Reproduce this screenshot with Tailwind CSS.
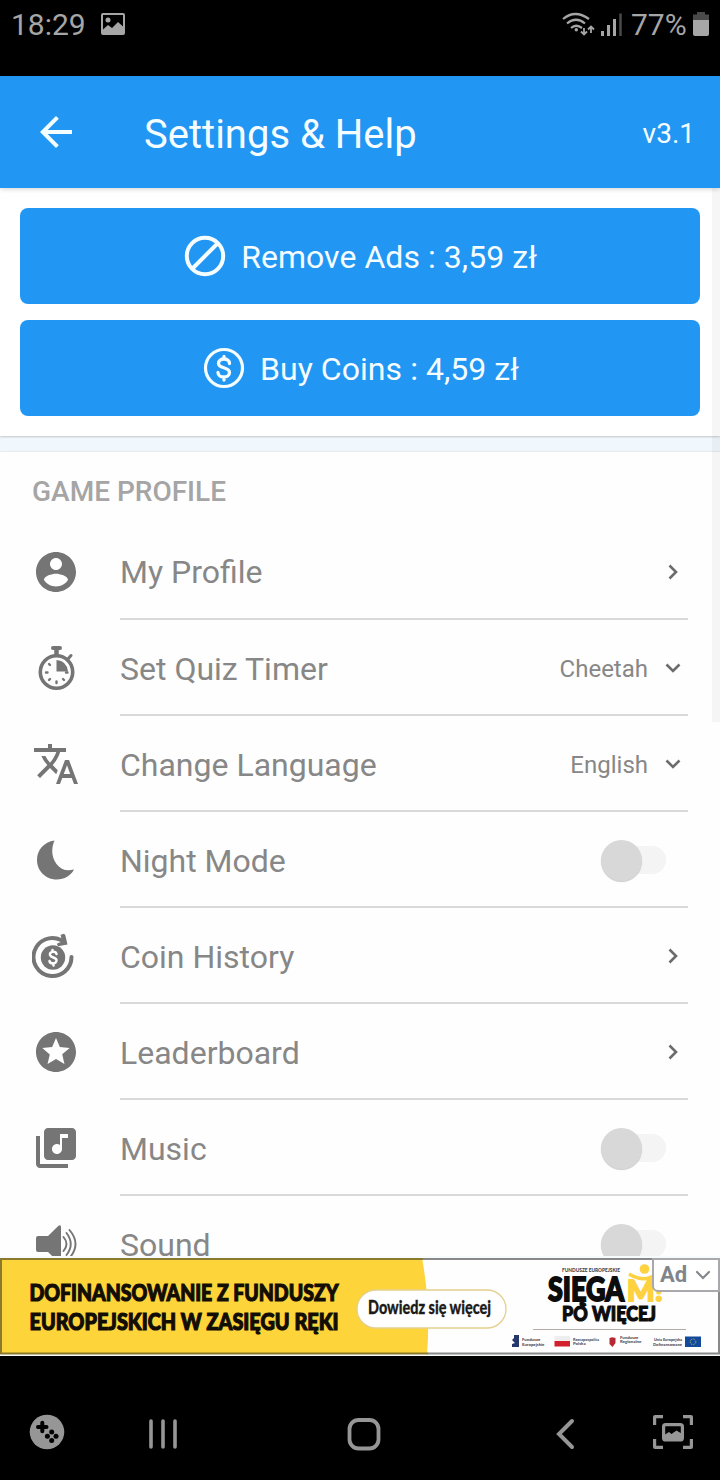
<!DOCTYPE html>
<html lang="en">
<head>
<meta charset="utf-8">
<title>Settings &amp; Help</title>
<script src="https://cdn.jsdelivr.net/npm/@tailwindcss/browser@4"></script>
</head>
<body class="bg-black">
<div class="relative flex h-[1480px] w-[720px] flex-col overflow-hidden bg-black font-['Roboto',sans-serif]">

  <!-- Status bar -->
  <div class="flex h-[76px] shrink-0 items-start justify-between pl-[11px] pr-[11px] pt-[5px] text-[30px] leading-10 text-[#a6a6a6]">
    <div class="flex items-start">
      <span class="w-[90px] whitespace-nowrap">18:29</span>
      <svg class="mt-2 h-[22px] w-6" viewBox="0 0 24 22"><path fill="#a6a6a6" fill-rule="evenodd" d="M2 0h20q2 0 2 2v18q0 2-2 2H2q-2 0-2-2V2q0-2 2-2zm0 2v14.500l5-4.500 4 3 6-6 5 4.500V2z"/><circle cx="7" cy="7" r="2.500" fill="#a6a6a6"/></svg>
    </div>
    <div class="flex items-start">
      <svg class="mt-[6px] h-[26px] w-[62px]" viewBox="0 0 62 26" fill="none" stroke="#a6a6a6" stroke-width="2.200">
        <path d="M2 8q12-10 26 0M6 12.500q9-7.500 18 0M10 17q5-4.500 11 0"/>
        <circle cx="15.300" cy="18.700" r="1.700" fill="#a6a6a6" stroke="none"/>
        <path stroke-width="1.800" d="M23 17v6M20 20.500l3 3 3-3M30 22v-6M27 18.500l3-3 3 3"/>
        <path stroke-width="3" d="M41.500 25v-5M47.500 25v-11M53.500 25V8"/>
        <path stroke="#4a4a4a" stroke-width="2.500" d="M59.500 25V2.500"/>
      </svg>
      <span class="ml-2 w-[62px] whitespace-nowrap">77%</span>
      <svg class="mt-[7px] h-6 w-4" viewBox="0 0 16 24"><path fill="#4a4a4a" d="M4 0h8v2.500h4V8H0V2.500h4z"/><path fill="#a6a6a6" d="M0 8h16v14q0 2-2 2H2q-2 0-2-2z"/></svg>
    </div>
  </div>

  <!-- App bar -->
  <header class="relative z-10 flex h-[112px] shrink-0 items-center bg-[#2196f3] pl-8 pr-[25px] text-[#f5fdff] shadow-[0_1px_5px_rgba(0,0,0,0.18)]">
    <svg class="h-12 w-12" viewBox="0 0 24 24" fill="#f5fdff"><path d="M20 11H7.830l5.590-5.590L12 4l-8 8 8 8 1.410-1.410L7.830 13H20v-2z"/></svg>
    <h1 class="ml-16 mt-[6px] flex-1 whitespace-nowrap text-[40px] leading-none">Settings &amp; Help</h1>
    <span class="mt-[3px] text-[28px] leading-none">v3.1</span>
  </header>

  <!-- Scrolling content -->
  <main class="relative flex h-[1068px] shrink-0 flex-col overflow-hidden bg-[#f1f8fd]">
    <section class="flex h-[248px] shrink-0 flex-col gap-4 bg-white p-5 text-[32px] leading-none text-[#f5fdff] shadow-[0_1px_2px_rgba(0,0,0,0.2)]">
      <button class="flex h-24 items-center justify-center gap-3 rounded-lg bg-[#2196f3] pr-[2px]">
        <svg class="h-12 w-12" viewBox="0 0 48 48" fill="none" stroke="#f5fdff" stroke-width="4"><circle cx="24" cy="24" r="18.200"/><path d="M11.500 36.500l25-25"/></svg>
        <span class="mt-[1px] whitespace-nowrap tracking-[0.05px]">Remove Ads : 3,59 zł</span>
      </button>
      <button class="flex h-24 items-center justify-center gap-3 rounded-lg bg-[#2196f3] pr-[1px]">
        <svg class="h-12 w-12" viewBox="0 0 48 48" fill="none" stroke="#f5fdff"><circle cx="24" cy="24" r="18.500" stroke-width="3.200"/><path stroke-width="3.300" stroke-linecap="round" d="M29.500 19.500c0-6-11-6-11 0 0 5.500 11 3 11 9 0 6-11.500 6-11.500 0M24 12.500v2.500M24 33v3"/></svg>
        <span class="mt-[1px] whitespace-nowrap tracking-[0.05px]">Buy Coins : 4,59 zł</span>
      </button>
    </section>

    <section class="mt-4 h-[900px] shrink-0 bg-[#fefefe] shadow-[0_0_2px_rgba(0,0,0,0.15)]">
      <h2 class="h-[72px] pl-8 pt-[26px] text-[28px] font-medium leading-7 text-[#a5a5a5]">GAME PROFILE</h2>

      <div class="flex h-24 items-center gap-10 px-8 text-[32px] text-[#878787]">
        <svg class="h-12 w-12 shrink-0" viewBox="0 0 24 24" fill="#757575"><path d="M12 2C6.480 2 2 6.480 2 12s4.480 10 10 10 10-4.480 10-10S17.520 2 12 2zm0 3c1.660 0 3 1.340 3 3s-1.340 3-3 3-3-1.340-3-3 1.340-3 3-3zm0 14.200c-2.500 0-4.710-1.280-6-3.220.030-1.990 4-3.080 6-3.080 1.990 0 5.970 1.090 6 3.080-1.290 1.940-3.500 3.220-6 3.220z"/></svg>
        <div class="flex h-full flex-1 items-center justify-between border-b-2 border-[#d9d9d9] pr-[9px] pt-[2px]">
          <span>My Profile</span>
          <svg class="h-4 w-3" viewBox="0 0 12 16" fill="none" stroke="#6c6c6c" stroke-width="2.600"><path d="M2.500 1.500L9 8l-6.500 6.500"/></svg>
        </div>
      </div>

      <div class="flex h-24 items-center gap-10 px-8 text-[32px] text-[#878787]">
        <svg class="h-12 w-12 shrink-0" viewBox="0 0 48 48" fill="none" stroke="#757575"><circle cx="24.500" cy="28" r="16.200" stroke-width="3.600"/><path fill="#757575" stroke="none" d="M24.500 16v11.500h11.500Q35 17 24.500 16z"/><path stroke-width="4" stroke-linecap="round" d="M21 4h7"/><path stroke-width="4.500" d="M24.500 4v8"/><path stroke-width="3" stroke-linecap="round" d="M35.500 15.500l3.500-4"/><path stroke-width="2.400" stroke-linecap="round" d="M14 28.500h1.500M34 28.500h1.500M24.500 37.500v1.500M17 20l1 1M17 36l1-1M32 36l-1-1"/></svg>
        <div class="flex h-full flex-1 items-center justify-between border-b-2 border-[#d9d9d9] pr-[7px] pt-[2px]">
          <span class="pt-[2px]">Set Quiz Timer</span>
          <div class="flex items-center gap-[17px] text-[24px]"><span class="pt-[2px]">Cheetah</span><svg class="h-3 w-4" viewBox="0 0 16 12" fill="none" stroke="#6c6c6c" stroke-width="2.600"><path d="M1.500 2.500L8 9l6.500-6.500"/></svg></div>
        </div>
      </div>

      <div class="flex h-24 items-center gap-10 px-8 text-[32px] text-[#878787]">
        <svg class="h-12 w-12 shrink-0" viewBox="0 0 24 24" fill="#757575"><path d="M12.870 15.070l-2.540-2.510.030-.030c1.740-1.940 2.980-4.170 3.710-6.530H17V4h-7V2H8v2H1v1.990h11.170C11.500 7.920 10.440 9.750 9 11.350 8.070 10.320 7.300 9.190 6.690 8h-2c.730 1.630 1.730 3.170 2.980 4.560l-5.090 5.020L4 19l5-5 3.110 3.110.760-2.040zM18.500 10h-2L12 22h2l1.120-3h4.750L21 22h2l-4.500-12zm-2.620 7l1.620-4.330L19.120 17h-3.240z"/></svg>
        <div class="flex h-full flex-1 items-center justify-between border-b-2 border-[#d9d9d9] pr-[7px] pt-[2px]">
          <span class="pt-[2px]">Change Language</span>
          <div class="flex items-center gap-[17px] text-[24px]"><span class="pt-[2px]">English</span><svg class="h-3 w-4" viewBox="0 0 16 12" fill="none" stroke="#6c6c6c" stroke-width="2.600"><path d="M1.500 2.500L8 9l6.500-6.500"/></svg></div>
        </div>
      </div>

      <div class="flex h-24 items-center gap-10 px-8 text-[32px] text-[#878787]">
        <svg class="h-12 w-12 shrink-0" viewBox="0 0 48 48" fill="#757575"><path d="M22.500 4.500C12 6 5 14 5 24c0 11 9 19.500 19.500 19.500 8 0 14.500-4 17.500-10-7 2-13 .500-17.500-5.500-5-7-5.500-15.500-2-23.500z"/></svg>
        <div class="flex h-full flex-1 items-center justify-between border-b-2 border-[#d9d9d9] pr-[22px] pt-[2px]">
          <span class="pt-[2px]">Night Mode</span>
          <div class="flex h-7 w-[65px] items-center rounded-full bg-[#f4f4f4]"><div class="h-[41px] w-[41px] shrink-0 rounded-full bg-[#d8d8d8] shadow-[0_1px_1px_rgba(0,0,0,0.2)]"></div></div>
        </div>
      </div>

      <div class="flex h-24 items-center gap-10 px-8 text-[32px] text-[#878787]">
        <svg class="h-12 w-12 shrink-0" viewBox="0 0 48 48" fill="none" stroke="#757575"><path stroke-width="4" stroke-linecap="round" d="M39.500 25A19 19 0 1 1 29 8"/><path fill="#757575" stroke="none" d="M28.500 3l3-1.200q1.500 0 1.800 1.500l2.200 9.200-9.500 1.800-1.200-2.500 5.500-2.500z"/><circle cx="21" cy="25.500" r="12.200" fill="#757575" stroke="none"/><path stroke="#fefefe" stroke-width="2.500" stroke-linecap="round" d="M24.500 22c-1-3.500-7.500-2.500-6.500 1 .800 3 6 2 6.500 5 .500 4-6.500 4.500-7 1M20.500 18v1.500M21.500 32v1.500"/></svg>
        <div class="flex h-full flex-1 items-center justify-between border-b-2 border-[#d9d9d9] pr-[9px] pt-[2px]">
          <span class="pt-[2px]">Coin History</span>
          <svg class="h-4 w-3" viewBox="0 0 12 16" fill="none" stroke="#6c6c6c" stroke-width="2.600"><path d="M2.500 1.500L9 8l-6.500 6.500"/></svg>
        </div>
      </div>

      <div class="flex h-24 items-center gap-10 px-8 text-[32px] text-[#878787]">
        <svg class="h-12 w-12 shrink-0" viewBox="0 0 24 24" fill="#757575"><path d="M11.990 2C6.470 2 2 6.480 2 12s4.470 10 9.990 10C17.520 22 22 17.520 22 12S17.520 2 11.990 2zm4.240 16L12 15.450 7.770 18l1.120-4.810-3.730-3.230 4.920-.420L12 5l1.920 4.530 4.920.420-3.730 3.230L16.230 18z"/></svg>
        <div class="flex h-full flex-1 items-center justify-between border-b-2 border-[#d9d9d9] pr-[9px] pt-[2px]">
          <span class="pt-[2px]">Leaderboard</span>
          <svg class="h-4 w-3" viewBox="0 0 12 16" fill="none" stroke="#6c6c6c" stroke-width="2.600"><path d="M2.500 1.500L9 8l-6.500 6.500"/></svg>
        </div>
      </div>

      <div class="flex h-24 items-center gap-10 px-8 text-[32px] text-[#878787]">
        <svg class="h-12 w-12 shrink-0" viewBox="0 0 24 24" fill="#757575"><path d="M20 2H8c-1.100 0-2 .900-2 2v12c0 1.100.900 2 2 2h12c1.100 0 2-.900 2-2V4c0-1.100-.900-2-2-2zm-2 5h-3v5.500c0 1.380-1.120 2.500-2.500 2.500S10 13.880 10 12.500s1.120-2.500 2.500-2.500c.570 0 1.080.190 1.500.510V5h4v2zM4 6H2v14c0 1.100.900 2 2 2h14v-2H4V6z"/></svg>
        <div class="flex h-full flex-1 items-center justify-between border-b-2 border-[#d9d9d9] pr-[22px] pt-[2px]">
          <span class="pt-[2px]">Music</span>
          <div class="flex h-7 w-[65px] items-center rounded-full bg-[#f4f4f4]"><div class="h-[41px] w-[41px] shrink-0 rounded-full bg-[#d8d8d8] shadow-[0_1px_1px_rgba(0,0,0,0.2)]"></div></div>
        </div>
      </div>

      <div class="flex h-24 items-center gap-10 px-8 text-[32px] text-[#878787]">
        <svg class="h-12 w-12 shrink-0" viewBox="0 0 48 48" fill="none" stroke="#757575"><path fill="#757575" stroke="none" d="M6 16h10L26.500 5.800q2.500-1.300 2.500 1.200v34q0 2.500-2.500 1.200L16 32H6q-2 0-2-2V18q0-2 2-2z"/><path stroke-width="1.900" stroke-linecap="round" d="M31.500 17q6 7 0 14M34.500 13q8.500 11 0 22M37.500 10q12 14 0 28"/></svg>
        <div class="flex h-full flex-1 items-center justify-between border-b-2 border-[#d9d9d9] pr-[22px] pt-[2px]">
          <span class="pt-[2px]">Sound</span>
          <div class="flex h-7 w-[65px] items-center rounded-full bg-[#f4f4f4]"><div class="h-[41px] w-[41px] shrink-0 rounded-full bg-[#d8d8d8] shadow-[0_1px_1px_rgba(0,0,0,0.2)]"></div></div>
        </div>
      </div>
    </section>

    <!-- Scroll indicator -->
    <div class="absolute right-0 top-0 h-[534px] w-2 bg-black/[0.035]"></div>
  </main>

  <!-- Banner advertisement -->
  <div class="relative h-[100px] shrink-0 bg-[#f7fbfb]">
    <svg class="block h-[100px] w-[720px] font-['Lato',sans-serif]" viewBox="0 1256 720 100">
      <rect x="0" y="1258" width="720" height="96" fill="#fefefe"/>
      <path fill="#fdd43a" d="M0 1258h422q9 48 5 96H0z"/>
      <path fill="none" stroke="#8b7a2c" stroke-width="2" d="M425 1259H1v94.500h427"/>
      <path fill="none" stroke="#898989" stroke-width="2" d="M423 1259h296v94.500H427"/>
      <g fill="#120d05" stroke="#120d05" stroke-width="1.200" font-weight="900" font-size="23.500">
        <text x="29.500" y="1301.300" textLength="309" lengthAdjust="spacingAndGlyphs">DOFINANSOWANIE Z FUNDUSZY</text>
        <text x="29.500" y="1330.300" textLength="309" lengthAdjust="spacingAndGlyphs">EUROPEJSKICH W ZASIĘGU RĘKI</text>
      </g>
      <rect x="357" y="1290" width="149" height="38" rx="19" fill="#fff" stroke="#e5cf8c" stroke-width="1.300"/>
      <text x="368" y="1314" font-size="18.500" font-weight="900" fill="#1c1b19" stroke="#1c1b19" stroke-width=".3" textLength="123" lengthAdjust="spacingAndGlyphs">Dowiedz się więcej</text>
      <text x="562" y="1272" font-size="5.500" font-weight="900" fill="#444" textLength="58" lengthAdjust="spacingAndGlyphs">FUNDUSZE EUROPEJSKIE</text>
      <g fill="#0c0c0c" stroke="#0c0c0c" font-weight="900">
        <text x="548" y="1300.500" font-size="32" stroke-width="1.800" textLength="76" lengthAdjust="spacingAndGlyphs">SIĘGA</text>
        <text x="562" y="1320.500" font-size="21" stroke-width="1.200" textLength="94" lengthAdjust="spacingAndGlyphs">PO WIĘCEJ</text>
      </g>
      <circle cx="644.500" cy="1269" r="4.800" fill="#fdd13f"/>
      <path fill="none" stroke="#fdd13f" stroke-width="3.500" d="M629 1274q15 9 26 1"/>
      <text x="627" y="1300.500" font-size="29" font-weight="900" fill="#fdd13f" stroke="#fdd13f" stroke-width="1.800" textLength="36" lengthAdjust="spacingAndGlyphs">M!</text>
      <path stroke="#b5aaa5" d="M533 1329.500h153"/>
      <path fill="#26376b" d="M514 1335h5v12h-7v-3l3-1-3-3 2-2z"/>
      <g fill="#4b4b55" font-size="4.300" font-weight="900">
        <text x="522" y="1341">Fundusze</text><text x="522" y="1346">Europejskie</text>
        <text x="573" y="1341" textLength="26" lengthAdjust="spacingAndGlyphs">Rzeczpospolita</text><text x="573" y="1345">Polska</text>
        <text x="620" y="1339">Fundusze</text><text x="620" y="1343">Regionalne</text>
        <text x="682" y="1341" text-anchor="end" textLength="28" lengthAdjust="spacingAndGlyphs">Unia Europejska</text><text x="682" y="1346" text-anchor="end" textLength="29" lengthAdjust="spacingAndGlyphs">Dofinansowane</text>
      </g>
      <path fill="#eee" d="M554.500 1336h15.500v5h-15.500z"/><path fill="#d2202c" d="M554.500 1341h15.500v5.500h-15.500z"/>
      <path fill="#b52833" d="M609.500 1338l3-.8 3 .8v5l-3 4-3-3z"/>
      <path fill="#124a9c" d="M685 1336.500h16v10.500h-16z"/><circle cx="693" cy="1341.800" r="2.800" fill="none" stroke="#c9b957" stroke-width=".9" stroke-dasharray="1 .8"/>
    </svg>
    <div class="absolute right-0 top-[2px] flex h-[34px] w-[68px] items-center rounded-bl-md border-2 border-[#a9a9ad] bg-white pl-[6px] text-[22px] font-bold leading-none text-[#7f858b]">
      <span class="w-[35px]">Ad</span>
      <svg class="h-3 w-4" viewBox="0 0 16 12" fill="none" stroke="#85898d" stroke-width="2.200" stroke-linecap="round"><path d="M2 3l6 6 6-6"/></svg>
    </div>
  </div>

  <!-- System navigation -->
  <nav class="flex flex-1 items-start pt-[56px]">
    <svg class="ml-7 h-11 w-10" viewBox="28 1412 40 44"><circle cx="47" cy="1432" r="17.300" fill="#969696"/><path stroke="#000" stroke-width="4" stroke-linecap="round" d="M38 1427h8.500M42.300 1422.700v8.500"/><g><circle cx="51.700" cy="1432" r="2.500"/><circle cx="47.400" cy="1436.300" r="2.500"/><circle cx="56" cy="1436.300" r="2.500"/><circle cx="51.700" cy="1440.600" r="2.500"/></g></svg>
    <svg class="ml-[72px] h-11 w-11" viewBox="140 1412 44 44"><path stroke="#969696" stroke-width="3.600" stroke-linecap="round" d="M151 1421v26M163 1421v26M175 1421v26"/></svg>
    <svg class="ml-[158px] h-11 w-11" viewBox="342 1412 44 44"><rect x="349.500" y="1420" width="29" height="28.500" rx="9" fill="none" stroke="#969696" stroke-width="3.800"/></svg>
    <svg class="ml-[160px] h-11 w-10" viewBox="546 1412 40 44"><path fill="none" stroke="#969696" stroke-width="4" stroke-linecap="round" d="M572 1421l-13 13 13 13"/></svg>
    <svg class="ml-[62px] h-11 w-12" viewBox="648 1412 48 44"><g fill="none" stroke="#969696" stroke-width="3.200"><path d="M654.600 1425v-8q0-.4.400-.4h8M683 1416.600h8q.4 0 .4.400v8M654.600 1439v8q0 .4.400.4h8M683 1447.400h8q.4 0 .4-.4v-8"/><rect x="663.600" y="1424.600" width="18.800" height="15.300" rx="2"/></g><path fill="#969696" d="M665 1434.500l4-2.500 2.500 2 5-3.500 5 3v6h-16.500z"/></svg>
  </nav>
</div>
</body>
</html>
